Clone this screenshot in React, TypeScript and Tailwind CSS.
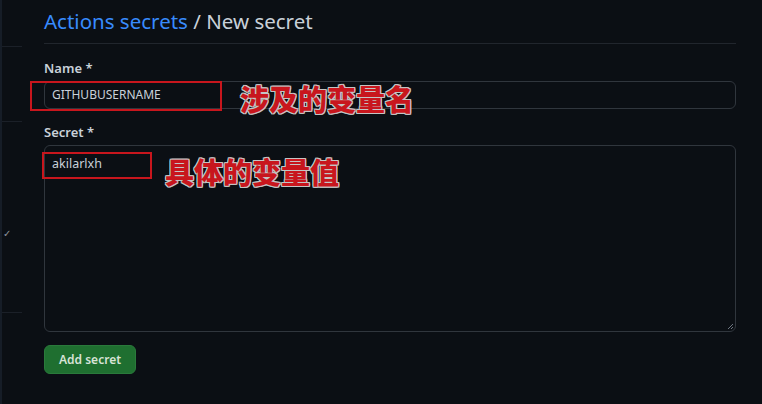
import React from "react";

const ui = "font-['Noto_Sans','Liberation_Sans',sans-serif]";
const note =
  "font-['Noto_Sans_CJK_SC',sans-serif] font-black text-[29px] leading-none text-[#c8161d] [text-shadow:1px_1px_0_#c4c4c4,-1px_-1px_0_#c4c4c4,1px_-1px_0_#c4c4c4,-1px_1px_0_#c4c4c4,0_1px_0_#c4c4c4,0_-1px_0_#c4c4c4,1px_0_0_#c4c4c4,-1px_0_0_#c4c4c4]";

function Sidebar() {
  return (
    <aside className="w-[22px] shrink-0 border-l-2 border-[#161d27] flex flex-col">
      <div className="h-[47px] border-b border-[#1b2028]" />
      <div className="h-[75px] border-b border-[#1b2028]" />
      <div className="h-[106px]" />
      <div className="h-[85px] border-b border-[#1b2028] text-[#8b949e] text-[10px] leading-none pl-[1px]">
        ✓
      </div>
    </aside>
  );
}

export default function App() {
  return (
    <div className={`${ui} w-[762px] h-[404px] bg-[#0b0f14] flex overflow-hidden`}>
      <Sidebar />
      <main className="flex-1 pl-[22px] pr-[26px]">
        <h1 className="h-[44px] pt-[7px] border-b border-[#21262d] text-[20.5px] leading-[28px] text-[#c9d1d9]">
          <span className="text-[#388bfd]">Actions secrets</span> / New secret
        </h1>

        <div className="relative mt-[15px]">
          <label className="block text-[13px] font-semibold leading-[18px] text-[#c9d1d9]">Name *</label>
          <div className="mt-[4px] h-[28px] rounded-md border border-[#30363d] px-[7px] flex items-center text-[12px] text-[#c9d1d9]">
            GITHUBUSERNAME
          </div>
          <div className="absolute left-[-14px] top-[22px] w-[192px] h-[30px] border-2 border-[#c8161d]" />
          <div className={`absolute left-[196px] top-[25px] ${note}`}>涉及的变量名</div>
        </div>

        <div className="relative mt-[14px]">
          <label className="block text-[13px] font-semibold leading-[18px] text-[#c9d1d9]">Secret *</label>
          <div className="relative mt-[4px] h-[187px] rounded-md border border-[#30363d] px-[7px] pt-[9px] text-[12.5px] leading-[18px] text-[#c9d1d9]">
            akilarlxh
            <svg className="absolute right-[1px] bottom-[1px]" width="7" height="7" viewBox="0 0 7 7">
              <path d="M6 1L1 6M6 4L4 6" stroke="#6e7681" strokeWidth="1" />
            </svg>
          </div>
          <div className="absolute left-[-2px] top-[29px] w-[110px] h-[27px] border-2 border-[#c8161d]" />
          <div className={`absolute left-[121px] top-[34px] ${note}`}>具体的变量值</div>
        </div>

        <button className="mt-[13px] h-[29px] px-[14px] rounded-md bg-[#1f6f30] border border-[#2a7a3b] text-[12px] font-semibold text-[#d7e3d6]">
          Add secret
        </button>
      </main>
    </div>
  );
}
